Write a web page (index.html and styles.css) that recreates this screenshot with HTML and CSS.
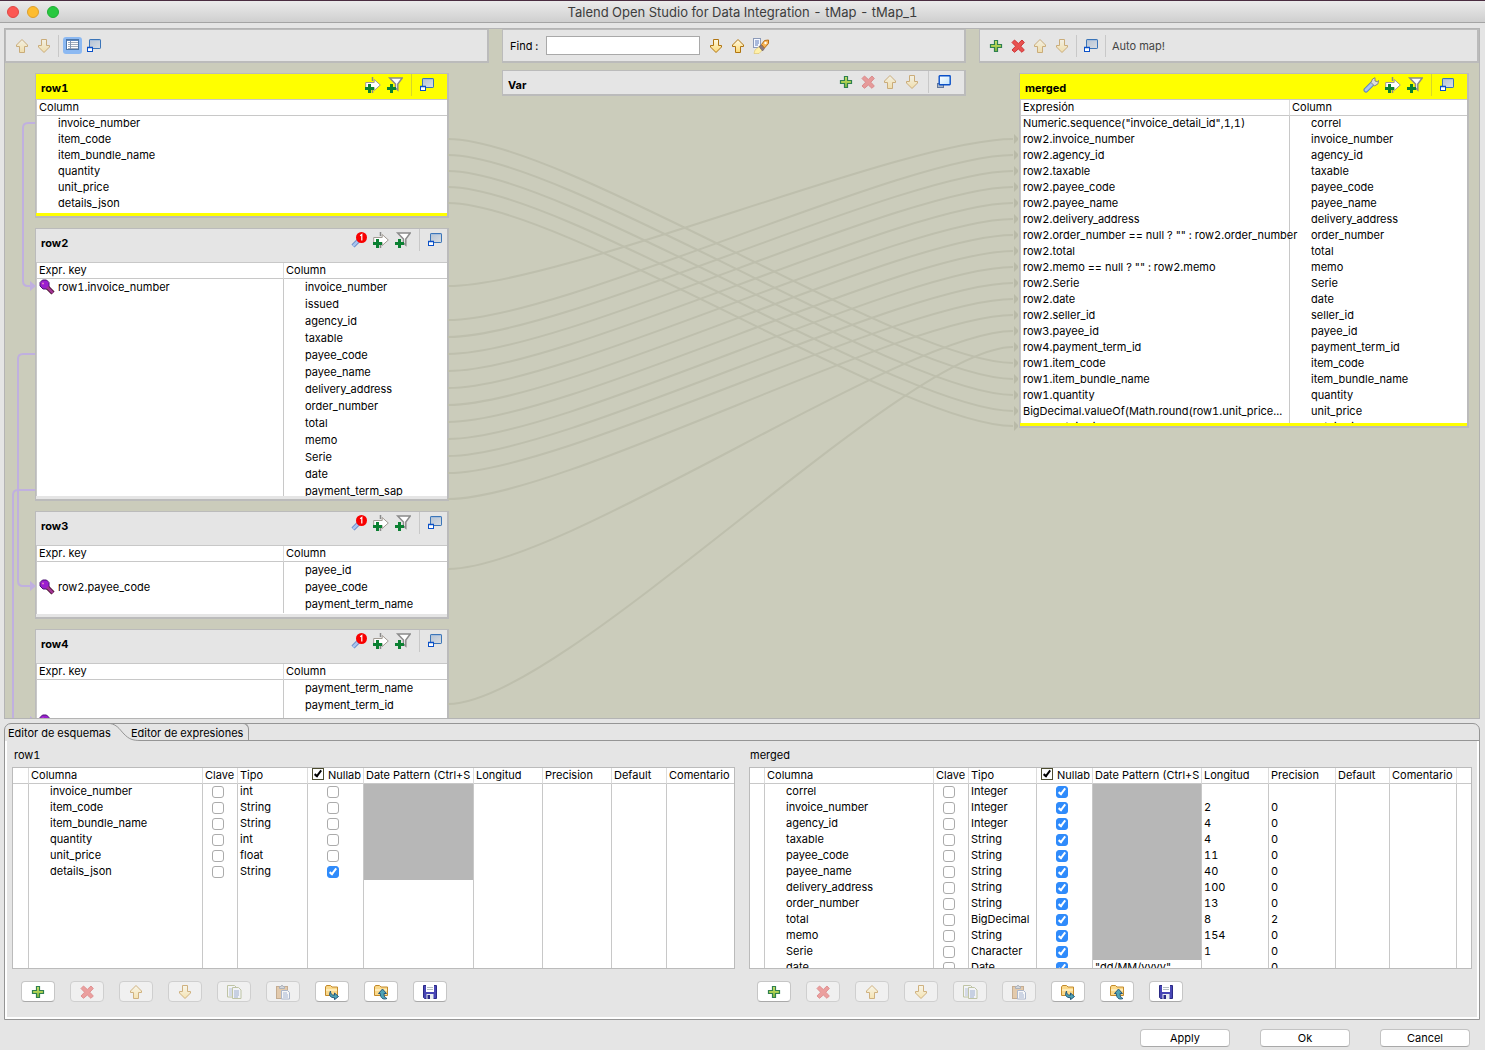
FILE: index.html
```html
<!DOCTYPE html>
<html lang="es">
<head>
<meta charset="utf-8">
<title>Talend Open Studio for Data Integration - tMap - tMap_1</title>
<link rel="stylesheet" href="styles.css">
</head>
<body>
<svg class="sprite" aria-hidden="true">
  <defs>
    <linearGradient id="g-gold" x1="0" y1="0" x2="0" y2="1"><stop offset="0" stop-color="#fffbe6"/><stop offset="1" stop-color="#fbd873"/></linearGradient>
    <linearGradient id="g-green" x1="0" y1="0" x2="0" y2="1"><stop offset="0" stop-color="#d9ea6a"/><stop offset="1" stop-color="#7fb53a"/></linearGradient>
    <linearGradient id="g-win" x1="0" y1="0" x2="1" y2="1"><stop offset="0" stop-color="#b4c2d4"/><stop offset="1" stop-color="#d8dde2"/></linearGradient>
    <linearGradient id="g-sky" x1="0" y1="0" x2="1" y2="1"><stop offset="0" stop-color="#ffffff"/><stop offset="1" stop-color="#bfe3fb"/></linearGradient>
  </defs>
  <symbol id="i-up" viewBox="0 0 16 16"><path d="M8 1.500 13.500 7v1.500h-3v6h-5v-6h-3V7z" fill="url(#g-gold)" stroke="#b07410"/></symbol>
  <symbol id="i-down" viewBox="0 0 16 16"><path d="M8 14.500 13.500 9V7.500h-3v-6h-5v6h-3V9z" fill="url(#g-gold)" stroke="#b07410"/></symbol>
  <symbol id="i-plus" viewBox="0 0 16 16"><path d="M6.500 2.500h3v4h4v3h-4v4h-3v-4h-4v-3h4z" fill="url(#g-green)" stroke="#2f8050" stroke-width="1.200"/></symbol>
  <symbol id="i-cross" viewBox="0 0 16 16"><path d="M2 4.500 4.500 2l3.800 3.500L12 2l2.300 2.500L10.800 8.200 14.300 12 12 14.300 8.300 11 4.500 14.300 2 12l3.600-3.800z" fill="#e8514f" stroke="#cf3436"/></symbol>
  <symbol id="i-min" viewBox="0 0 16 16"><rect x="3.500" y="1.500" width="11" height="9" rx=".6" fill="url(#g-win)" stroke="#3a74b8"/><path d="M4 2.500h10" stroke="#a5bddb"/><rect x="1.500" y="9.500" width="5" height="4" fill="#fff" stroke="#0a50c8"/><path d="M1 9.500h6" stroke="#0a50c8" stroke-width="1.500"/></symbol>
  <symbol id="i-restore" viewBox="0 0 16 16"><rect x="1.500" y="9.500" width="6" height="4" fill="#aab4c4" stroke="#60779c"/><rect x="3.200" y="1.700" width="11" height="9" rx=".6" fill="url(#g-sky)" stroke="#0a50c8" stroke-width="1.400"/></symbol>
  <symbol id="i-list" viewBox="0 0 16 16"><rect x="1.500" y="2.500" width="12" height="10" fill="#fff" stroke="#4f77a8"/><path d="M2 3.500h11" stroke="#5d86bd"/><path d="M3 5.500h10M3 7.500h10M3 9.500h10M3 11.500h10" stroke="#a3adbb"/><path d="M5.500 4v8" stroke="#8396b3"/></symbol>
  <symbol id="i-addarrow" viewBox="0 0 16 16"><path d="M7.500 0v4M7.500 12v4" stroke="#8a8a8a" stroke-width="1.500"/><path d="M.700 5.500h8.500V2.500L15.300 8l-6.100 5.500v-3H.700z" fill="#fff" stroke="#a19a93"/><path d="M4.500 7v9M0 11.500h9" stroke="#0b8032" stroke-width="3"/></symbol>
  <symbol id="i-filter" viewBox="0 0 16 16"><path d="M2.700 1h12.600L10.800 7v6L8.500 11V7z" fill="#fff" stroke="#8b8b8b" stroke-width="1.500"/><path d="M4.500 7v9M0 11.500h9" stroke="#0b8032" stroke-width="3"/></symbol>
  <symbol id="i-wrench" viewBox="0 0 16 16"><path d="M9.500 6.500 3 13" stroke="#5e83c4" stroke-width="5" stroke-linecap="round"/><path d="M9 7 3 13" stroke="#a9c4ee" stroke-width="3" stroke-linecap="round"/><path d="M8 5.500 9.500 2 12 .700V4l2.500.600L15.500 3.500l-.5 3.300-3.500 2.200z" fill="#ddd" stroke="#858585"/></symbol>
  <symbol id="i-join" viewBox="0 0 16 16"><path d="M8.500 7.500 2 14" stroke="#5e83c4" stroke-width="4.200"/><path d="M8 8l-6 6" stroke="#a9c4ee" stroke-width="2.500"/><circle cx="10.500" cy="5.500" r="5.500" fill="#f80000"/><path d="M9.200 3.700 10.800 2.500v6" fill="none" stroke="#fff" stroke-width="1.200"/></symbol>
  <symbol id="i-hilite" viewBox="0 0 18 18"><rect x="1.500" y="1.500" width="7" height="9" fill="#f5f8ff" stroke="#8c9ab8"/><path d="M3 4h4M3 6h4M3 8h3" stroke="#5d7bb8"/><path d="M3 13 8 9l3 3.500-4 4H2z" fill="#fff0a8" stroke="#d8b850" stroke-width=".5"/><path d="M7 9.500 9.500 8l3 3.500-2 2.500z" fill="#8d7b82" stroke="#65585e" stroke-width=".6"/><path d="M9.500 7.500 12.500 3.500 16.500 3v3.500L12.500 11z" fill="#f7b456" stroke="#b86e19"/><circle cx="13.500" cy="6" r="1.200" fill="#fff"/></symbol>
  <symbol id="i-key" viewBox="0 0 16 16"><path d="m8.500 8.500 5.500 5.500" stroke="#4a1430" stroke-width="4.500"/><path d="M3.500 1h4L10 3.500V8L8 10H4L1 7V3.500z" fill="#9b1fd0" stroke="#4a1470"/><path d="m8 8 5.800 5.800" stroke="#a33496" stroke-width="2.600"/><path d="M3 4.500h2M4 3.500v2" stroke="#dd7fc0"/></symbol>
  <symbol id="i-copy" viewBox="0 0 16 16"><path d="M1.500 1.500h7l1.500 1.500v10H1.500z" fill="#f7f9ff" stroke="#8f9a5c"/><path d="M3 5h3M3 7h3M3 9h3M3 11h3" stroke="#7c92bf"/><path d="M6.500 3.500h6l2.500 2.500v8.500H6.500z" fill="#f4f7ff" stroke="#8f9a5c"/><path d="M8 7h5M8 9h5M8 11h5M8 13h4" stroke="#4d6cad"/></symbol>
  <symbol id="i-paste" viewBox="0 0 16 16"><rect x="1.500" y="2.500" width="11" height="12" fill="#d8a56a" stroke="#9a6a35"/><path d="M4.500 4.500v-2h1.500l1-1.500 1 1.500h1.500v2z" fill="#b8c0cc" stroke="#69758a"/><path d="M6.500 6.500h6l2 2v6.500h-8z" fill="#fff" stroke="#6b80aa"/><path d="M8 9h4M8 11h5M8 13h5" stroke="#5a78b4"/></symbol>
  <symbol id="i-import" viewBox="0 0 16 16"><path d="M1.500 11.500V3l1-1.500h4L8 3h5.500v8.500z" fill="#fbd98a" stroke="#c28a2c"/><path d="M2 6h11" stroke="#fff1c4" stroke-width="1.500"/><path d="M6.500 7c0 3 1 4.200 4 4.200V9l4 3.500-4 3.200v-2c-4.500 0-6-2.500-4-6.700z" fill="#4ea3b5" stroke="#24587c"/></symbol>
  <symbol id="i-export" viewBox="0 0 16 16"><path d="M1.500 11.500V3l1-1.500h4L8 3h6.500v8.500z" fill="#fbd98a" stroke="#c28a2c"/><path d="M2 6h12" stroke="#fff1c4" stroke-width="1.500"/><path d="M5.500 9.500 9.500 5l4 4.500H11c0 3 1 4.500 3 5-4 1.500-6.700-.5-6.700-5z" fill="#4ea3b5" stroke="#24587c"/></symbol>
  <symbol id="i-save" viewBox="0 0 16 16"><path d="M1.500 1.500h13v13h-12l-1-1z" fill="#4745b5" stroke="#2b2a86"/><rect x="4" y="1" width="8" height="7" fill="#fff"/><path d="M5 3.500h6M5 5.500h6" stroke="#b3bdc2"/><rect x="4.500" y="10" width="7" height="5" fill="#e9edf0"/><rect x="5.500" y="11" width="2.500" height="4" fill="#2b2a86"/></symbol>
</svg>

<header class="titlebar">
  <div class="lights">
    <button class="light light-close" aria-label="Cerrar"></button>
    <button class="light light-min" aria-label="Minimizar"></button>
    <button class="light light-zoom" aria-label="Ampliar"></button>
  </div>
  <h1 class="window-title">Talend Open Studio for Data Integration - tMap - tMap_1</h1>
</header>

<main class="workspace">
  <section class="zone">
    <div class="toolbar toolbar-inputs">
      <button class="icon-btn" disabled aria-label="Subir"><svg><use href="#i-up"/></svg></button>
      <button class="icon-btn" disabled aria-label="Bajar"><svg><use href="#i-down"/></svg></button>
      <span class="sep"></span>
      <button class="icon-btn icon-btn-on" aria-label="Vista de tabla"><svg><use href="#i-list"/></svg></button>
      <button class="icon-btn" aria-label="Minimizar tablas"><svg><use href="#i-min"/></svg></button>
    </div>

    <article class="card card-active card-left">
      <header class="card-head">
        <h2>row1</h2>
        <button class="icon-btn" aria-label="Añadir salida"><svg><use href="#i-addarrow"/></svg></button>
        <button class="icon-btn" aria-label="Añadir filtro"><svg><use href="#i-filter"/></svg></button>
        <span class="sep"></span>
        <button class="icon-btn" aria-label="Minimizar"><svg><use href="#i-min"/></svg></button>
      </header>
      <div class="card-body card-body-row1">
        <table class="map-table">
          <thead><tr><th>Column</th></tr></thead>
          <tbody>
            <tr><td class="indent">invoice_number</td></tr>
            <tr><td class="indent">item_code</td></tr>
            <tr><td class="indent">item_bundle_name</td></tr>
            <tr><td class="indent">quantity</td></tr>
            <tr><td class="indent">unit_price</td></tr>
            <tr><td class="indent">details_json</td></tr>
          </tbody>
        </table>
      </div>
    </article>

    <article class="card card-lookup card-left">
      <header class="card-head">
        <h2>row2</h2>
        <button class="icon-btn" aria-label="Ajustes de unión (1)"><svg><use href="#i-join"/></svg></button>
        <button class="icon-btn" aria-label="Añadir salida"><svg><use href="#i-addarrow"/></svg></button>
        <button class="icon-btn" aria-label="Añadir filtro"><svg><use href="#i-filter"/></svg></button>
        <span class="sep"></span>
        <button class="icon-btn" aria-label="Minimizar"><svg><use href="#i-min"/></svg></button>
      </header>
      <div class="card-body card-body-row2">
        <table class="map-table map-lookup">
          <colgroup><col class="col-key"><col></colgroup>
          <thead><tr><th>Expr. key</th><th>Column</th></tr></thead>
          <tbody>
            <tr><td><span class="key"><svg><use href="#i-key"/></svg>row1.invoice_number</span></td><td class="indent">invoice_number</td></tr>
            <tr><td></td><td class="indent">issued</td></tr>
            <tr><td></td><td class="indent">agency_id</td></tr>
            <tr><td></td><td class="indent">taxable</td></tr>
            <tr><td></td><td class="indent">payee_code</td></tr>
            <tr><td></td><td class="indent">payee_name</td></tr>
            <tr><td></td><td class="indent">delivery_address</td></tr>
            <tr><td></td><td class="indent">order_number</td></tr>
            <tr><td></td><td class="indent">total</td></tr>
            <tr><td></td><td class="indent">memo</td></tr>
            <tr><td></td><td class="indent">Serie</td></tr>
            <tr><td></td><td class="indent">date</td></tr>
            <tr><td></td><td class="indent">payment_term_sap</td></tr>
          </tbody>
        </table>
      </div>
    </article>

    <article class="card card-lookup card-left">
      <header class="card-head">
        <h2>row3</h2>
        <button class="icon-btn" aria-label="Ajustes de unión (1)"><svg><use href="#i-join"/></svg></button>
        <button class="icon-btn" aria-label="Añadir salida"><svg><use href="#i-addarrow"/></svg></button>
        <button class="icon-btn" aria-label="Añadir filtro"><svg><use href="#i-filter"/></svg></button>
        <span class="sep"></span>
        <button class="icon-btn" aria-label="Minimizar"><svg><use href="#i-min"/></svg></button>
      </header>
      <div class="card-body card-body-row3">
        <table class="map-table map-lookup">
          <colgroup><col class="col-key"><col></colgroup>
          <thead><tr><th>Expr. key</th><th>Column</th></tr></thead>
          <tbody>
            <tr><td></td><td class="indent">payee_id</td></tr>
            <tr><td><span class="key"><svg><use href="#i-key"/></svg>row2.payee_code</span></td><td class="indent">payee_code</td></tr>
            <tr><td></td><td class="indent">payment_term_name</td></tr>
          </tbody>
        </table>
      </div>
    </article>

    <article class="card card-lookup card-left">
      <header class="card-head">
        <h2>row4</h2>
        <button class="icon-btn" aria-label="Ajustes de unión (1)"><svg><use href="#i-join"/></svg></button>
        <button class="icon-btn" aria-label="Añadir salida"><svg><use href="#i-addarrow"/></svg></button>
        <button class="icon-btn" aria-label="Añadir filtro"><svg><use href="#i-filter"/></svg></button>
        <span class="sep"></span>
        <button class="icon-btn" aria-label="Minimizar"><svg><use href="#i-min"/></svg></button>
      </header>
      <div class="card-body card-body-row3">
        <table class="map-table map-lookup">
          <colgroup><col class="col-key"><col></colgroup>
          <thead><tr><th>Expr. key</th><th>Column</th></tr></thead>
          <tbody>
            <tr><td></td><td class="indent">payment_term_name</td></tr>
            <tr><td></td><td class="indent">payment_term_id</td></tr>
            <tr><td><span class="key"><svg><use href="#i-key"/></svg></span></td><td></td></tr>
          </tbody>
        </table>
      </div>
    </article>
  </section>

  <section class="zone">
    <div class="toolbar toolbar-find">
      <label for="find">Find :</label>
      <input class="find-input" id="find" type="text">
      <button class="icon-btn" aria-label="Buscar siguiente"><svg><use href="#i-down"/></svg></button>
      <button class="icon-btn" aria-label="Buscar anterior"><svg><use href="#i-up"/></svg></button>
      <button class="icon-btn icon-btn-wide" aria-label="Resaltar todo"><svg><use href="#i-hilite"/></svg></button>
    </div>
    <article class="card card-var">
      <header class="card-head">
        <h2>Var</h2>
        <button class="icon-btn" aria-label="Añadir variable"><svg><use href="#i-plus"/></svg></button>
        <button class="icon-btn" disabled aria-label="Eliminar variable"><svg><use href="#i-cross"/></svg></button>
        <button class="icon-btn" disabled aria-label="Subir"><svg><use href="#i-up"/></svg></button>
        <button class="icon-btn" disabled aria-label="Bajar"><svg><use href="#i-down"/></svg></button>
        <span class="sep"></span>
        <button class="icon-btn" aria-label="Restaurar"><svg><use href="#i-restore"/></svg></button>
      </header>
    </article>
  </section>

  <section class="zone">
    <div class="toolbar toolbar-outputs">
      <button class="icon-btn" aria-label="Añadir tabla"><svg><use href="#i-plus"/></svg></button>
      <button class="icon-btn" aria-label="Eliminar tabla"><svg><use href="#i-cross"/></svg></button>
      <button class="icon-btn" disabled aria-label="Subir"><svg><use href="#i-up"/></svg></button>
      <button class="icon-btn" disabled aria-label="Bajar"><svg><use href="#i-down"/></svg></button>
      <span class="sep"></span>
      <button class="icon-btn" aria-label="Minimizar tablas"><svg><use href="#i-min"/></svg></button>
      <span class="sep"></span>
      <button class="text-btn">Auto map!</button>
    </div>
    <article class="card card-active card-right">
      <header class="card-head">
        <h2>merged</h2>
        <button class="icon-btn" aria-label="Ajustes"><svg><use href="#i-wrench"/></svg></button>
        <button class="icon-btn" aria-label="Añadir salida"><svg><use href="#i-addarrow"/></svg></button>
        <button class="icon-btn" aria-label="Añadir filtro"><svg><use href="#i-filter"/></svg></button>
        <span class="sep"></span>
        <button class="icon-btn" aria-label="Minimizar"><svg><use href="#i-min"/></svg></button>
      </header>
      <div class="card-body card-body-merged">
        <table class="map-table">
          <colgroup><col class="col-expr"><col></colgroup>
          <thead><tr><th>Expresión</th><th>Column</th></tr></thead>
          <tbody>
            <tr><td>Numeric.sequence("invoice_detail_id",1,1)</td><td class="indent">correl</td></tr>
            <tr><td>row2.invoice_number</td><td class="indent">invoice_number</td></tr>
            <tr><td>row2.agency_id</td><td class="indent">agency_id</td></tr>
            <tr><td>row2.taxable</td><td class="indent">taxable</td></tr>
            <tr><td>row2.payee_code</td><td class="indent">payee_code</td></tr>
            <tr><td>row2.payee_name</td><td class="indent">payee_name</td></tr>
            <tr><td>row2.delivery_address</td><td class="indent">delivery_address</td></tr>
            <tr><td>row2.order_number == null ? "" : row2.order_number</td><td class="indent">order_number</td></tr>
            <tr><td>row2.total</td><td class="indent">total</td></tr>
            <tr><td>row2.memo == null ? "" : row2.memo</td><td class="indent">memo</td></tr>
            <tr><td>row2.Serie</td><td class="indent">Serie</td></tr>
            <tr><td>row2.date</td><td class="indent">date</td></tr>
            <tr><td>row2.seller_id</td><td class="indent">seller_id</td></tr>
            <tr><td>row3.payee_id</td><td class="indent">payee_id</td></tr>
            <tr><td>row4.payment_term_id</td><td class="indent">payment_term_id</td></tr>
            <tr><td>row1.item_code</td><td class="indent">item_code</td></tr>
            <tr><td>row1.item_bundle_name</td><td class="indent">item_bundle_name</td></tr>
            <tr><td>row1.quantity</td><td class="indent">quantity</td></tr>
            <tr><td>BigDecimal.valueOf(Math.round(row1.unit_price...</td><td class="indent">unit_price</td></tr>
            <tr><td>row1.details_json</td><td class="indent">details_json</td></tr>
          </tbody>
        </table>
      </div>
    </article>
  </section>

  <!-- Join links between the input tables -->
  <svg class="links links-join" viewBox="0 0 31 690" aria-hidden="true">
    <path d="M30 94H23q-5 0-5 5v153q0 5 5 5h3"/>
    <path d="M30 325H18q-5 0-5 5v222q0 5 5 5h8"/>
    <path d="M30 461H13q-5 0-5 5v222q0 5 5 5h13"/>
    <path class="head" d="M25 252l6 5-6 5zM25 552l6 5-6 5zM25 687l6 5-6 5z"/>
  </svg>
  <!-- Mapping links from the inputs to the output table -->
  <svg class="links links-map" viewBox="0 0 570 690" preserveAspectRatio="none" aria-hidden="true">
    <path d="M0 110C114 110 456 334 565 334"/>
    <path d="M0 126C114 126 456 350 565 350"/>
    <path d="M0 142C114 142 456 366 565 366"/>
    <path d="M0 158C114 158 456 382 565 382"/>
    <path d="M0 174C114 174 456 397 565 397"/>
    <path d="M0 257C114 257 456 110 565 110"/>
    <path d="M0 291C114 291 456 126 565 126"/>
    <path d="M0 308C114 308 456 142 565 142"/>
    <path d="M0 325C114 325 456 158 565 158"/>
    <path d="M0 342C114 342 456 174 565 174"/>
    <path d="M0 359C114 359 456 190 565 190"/>
    <path d="M0 376C114 376 456 206 565 206"/>
    <path d="M0 393C114 393 456 222 565 222"/>
    <path d="M0 410C114 410 456 238 565 238"/>
    <path d="M0 427C114 427 456 254 565 254"/>
    <path d="M0 444C114 444 456 270 565 270"/>
    <path d="M0 470C114 470 456 286 565 286"/>
    <path d="M0 540C114 540 456 302 565 302"/>
    <path d="M0 675C114 675 456 318 565 318"/>
    <path class="head" d="M566 105l5 5-5 5zM566 121l5 5-5 5zM566 137l5 5-5 5zM566 153l5 5-5 5zM566 169l5 5-5 5zM566 185l5 5-5 5zM566 201l5 5-5 5zM566 217l5 5-5 5zM566 233l5 5-5 5zM566 249l5 5-5 5zM566 265l5 5-5 5zM566 281l5 5-5 5zM566 297l5 5-5 5zM566 313l5 5-5 5zM566 329l5 5-5 5zM566 345l5 5-5 5zM566 361l5 5-5 5zM566 377l5 5-5 5zM566 392l5 5-5 5z"/>
  </svg>
</main>

<section class="folder">
  <div class="tabs" role="tablist">
    <button class="tab tab-on" role="tab" aria-selected="true">Editor de esquemas<svg class="tab-curve" viewBox="0 0 36 18" aria-hidden="true"><path d="M0 0C12 0 14 6 19 11 24 16 27 17.500 36 17.500"/></svg></button>
    <button class="tab tab-off" role="tab" aria-selected="false">Editor de expresiones</button>
    <span class="tab-rest"></span>
  </div>
  <div class="folder-body">
    <section class="schema">
      <h2 class="schema-name">row1</h2>
      <div class="schema-box">
        <table class="schema-table">
          <colgroup><col class="w16"><col class="w174"><col class="w35"><col class="w70"><col class="w56"><col class="w110"><col class="w69"><col class="w69"><col class="w55"><col></colgroup>
          <thead><tr><th></th><th>Columna</th><th>Clave</th><th>Tipo</th><th class="th-null"><label><input class="head-check" type="checkbox" checked>Nullab</label></th><th>Date Pattern (Ctrl+S</th><th>Longitud</th><th>Precision</th><th>Default</th><th>Comentario</th></tr></thead>
          <tbody>
            <tr><td></td><td class="name">invoice_number</td><td class="chk"><input type="checkbox" aria-label="Clave invoice_number"></td><td>int</td><td class="chk"><input type="checkbox" aria-label="Nullable invoice_number"></td><td class="off"></td><td></td><td></td><td></td><td></td></tr>
            <tr><td></td><td class="name">item_code</td><td class="chk"><input type="checkbox" aria-label="Clave item_code"></td><td>String</td><td class="chk"><input type="checkbox" aria-label="Nullable item_code"></td><td class="off"></td><td></td><td></td><td></td><td></td></tr>
            <tr><td></td><td class="name">item_bundle_name</td><td class="chk"><input type="checkbox" aria-label="Clave item_bundle_name"></td><td>String</td><td class="chk"><input type="checkbox" aria-label="Nullable item_bundle_name"></td><td class="off"></td><td></td><td></td><td></td><td></td></tr>
            <tr><td></td><td class="name">quantity</td><td class="chk"><input type="checkbox" aria-label="Clave quantity"></td><td>int</td><td class="chk"><input type="checkbox" aria-label="Nullable quantity"></td><td class="off"></td><td></td><td></td><td></td><td></td></tr>
            <tr><td></td><td class="name">unit_price</td><td class="chk"><input type="checkbox" aria-label="Clave unit_price"></td><td>float</td><td class="chk"><input type="checkbox" aria-label="Nullable unit_price"></td><td class="off"></td><td></td><td></td><td></td><td></td></tr>
            <tr><td></td><td class="name">details_json</td><td class="chk"><input type="checkbox" aria-label="Clave details_json"></td><td>String</td><td class="chk"><input type="checkbox" checked aria-label="Nullable details_json"></td><td class="off"></td><td></td><td></td><td></td><td></td></tr>
            <tr class="rest"><td></td><td></td><td></td><td></td><td></td><td></td><td></td><td></td><td></td><td></td></tr>
          </tbody>
        </table>
      </div>
      <div class="schema-actions">
        <button class="push" aria-label="Añadir"><svg><use href="#i-plus"/></svg></button>
        <button class="push" disabled aria-label="Eliminar"><svg><use href="#i-cross"/></svg></button>
        <button class="push" disabled aria-label="Subir"><svg><use href="#i-up"/></svg></button>
        <button class="push" disabled aria-label="Bajar"><svg><use href="#i-down"/></svg></button>
        <button class="push" disabled aria-label="Copiar"><svg><use href="#i-copy"/></svg></button>
        <button class="push" disabled aria-label="Pegar"><svg><use href="#i-paste"/></svg></button>
        <button class="push" aria-label="Importar"><svg><use href="#i-import"/></svg></button>
        <button class="push" aria-label="Exportar"><svg><use href="#i-export"/></svg></button>
        <button class="push" aria-label="Guardar"><svg><use href="#i-save"/></svg></button>
      </div>
    </section>

    <section class="schema">
      <h2 class="schema-name">merged</h2>
      <div class="schema-box">
        <table class="schema-table">
          <colgroup><col class="w15"><col class="w169"><col class="w35"><col class="w68"><col class="w56"><col class="w109"><col class="w67"><col class="w67"><col class="w54"><col class="w67"><col></colgroup>
          <thead><tr><th></th><th>Columna</th><th>Clave</th><th>Tipo</th><th class="th-null"><label><input class="head-check" type="checkbox" checked>Nullab</label></th><th>Date Pattern (Ctrl+S</th><th>Longitud</th><th>Precision</th><th>Default</th><th>Comentario</th><th></th></tr></thead>
          <tbody>
            <tr><td></td><td class="name">correl</td><td class="chk"><input type="checkbox" aria-label="Clave correl"></td><td>Integer</td><td class="chk"><input type="checkbox" checked aria-label="Nullable correl"></td><td class="off"></td><td></td><td></td><td></td><td></td><td></td></tr>
            <tr><td></td><td class="name">invoice_number</td><td class="chk"><input type="checkbox" aria-label="Clave invoice_number"></td><td>Integer</td><td class="chk"><input type="checkbox" checked aria-label="Nullable invoice_number"></td><td class="off"></td><td>2</td><td>0</td><td></td><td></td><td></td></tr>
            <tr><td></td><td class="name">agency_id</td><td class="chk"><input type="checkbox" aria-label="Clave agency_id"></td><td>Integer</td><td class="chk"><input type="checkbox" checked aria-label="Nullable agency_id"></td><td class="off"></td><td>4</td><td>0</td><td></td><td></td><td></td></tr>
            <tr><td></td><td class="name">taxable</td><td class="chk"><input type="checkbox" aria-label="Clave taxable"></td><td>String</td><td class="chk"><input type="checkbox" checked aria-label="Nullable taxable"></td><td class="off"></td><td>4</td><td>0</td><td></td><td></td><td></td></tr>
            <tr><td></td><td class="name">payee_code</td><td class="chk"><input type="checkbox" aria-label="Clave payee_code"></td><td>String</td><td class="chk"><input type="checkbox" checked aria-label="Nullable payee_code"></td><td class="off"></td><td>11</td><td>0</td><td></td><td></td><td></td></tr>
            <tr><td></td><td class="name">payee_name</td><td class="chk"><input type="checkbox" aria-label="Clave payee_name"></td><td>String</td><td class="chk"><input type="checkbox" checked aria-label="Nullable payee_name"></td><td class="off"></td><td>40</td><td>0</td><td></td><td></td><td></td></tr>
            <tr><td></td><td class="name">delivery_address</td><td class="chk"><input type="checkbox" aria-label="Clave delivery_address"></td><td>String</td><td class="chk"><input type="checkbox" checked aria-label="Nullable delivery_address"></td><td class="off"></td><td>100</td><td>0</td><td></td><td></td><td></td></tr>
            <tr><td></td><td class="name">order_number</td><td class="chk"><input type="checkbox" aria-label="Clave order_number"></td><td>String</td><td class="chk"><input type="checkbox" checked aria-label="Nullable order_number"></td><td class="off"></td><td>13</td><td>0</td><td></td><td></td><td></td></tr>
            <tr><td></td><td class="name">total</td><td class="chk"><input type="checkbox" aria-label="Clave total"></td><td>BigDecimal</td><td class="chk"><input type="checkbox" checked aria-label="Nullable total"></td><td class="off"></td><td>8</td><td>2</td><td></td><td></td><td></td></tr>
            <tr><td></td><td class="name">memo</td><td class="chk"><input type="checkbox" aria-label="Clave memo"></td><td>String</td><td class="chk"><input type="checkbox" checked aria-label="Nullable memo"></td><td class="off"></td><td>154</td><td>0</td><td></td><td></td><td></td></tr>
            <tr><td></td><td class="name">Serie</td><td class="chk"><input type="checkbox" aria-label="Clave Serie"></td><td>Character</td><td class="chk"><input type="checkbox" checked aria-label="Nullable Serie"></td><td class="off"></td><td>1</td><td>0</td><td></td><td></td><td></td></tr>
            <tr><td></td><td class="name">date</td><td class="chk"><input type="checkbox" aria-label="Clave date"></td><td>Date</td><td class="chk"><input type="checkbox" checked aria-label="Nullable date"></td><td>"dd/MM/yyyy"</td><td></td><td>0</td><td></td><td></td><td></td></tr>
          </tbody>
        </table>
      </div>
      <div class="schema-actions">
        <button class="push" aria-label="Añadir"><svg><use href="#i-plus"/></svg></button>
        <button class="push" disabled aria-label="Eliminar"><svg><use href="#i-cross"/></svg></button>
        <button class="push" disabled aria-label="Subir"><svg><use href="#i-up"/></svg></button>
        <button class="push" disabled aria-label="Bajar"><svg><use href="#i-down"/></svg></button>
        <button class="push" disabled aria-label="Copiar"><svg><use href="#i-copy"/></svg></button>
        <button class="push" disabled aria-label="Pegar"><svg><use href="#i-paste"/></svg></button>
        <button class="push" aria-label="Importar"><svg><use href="#i-import"/></svg></button>
        <button class="push" aria-label="Exportar"><svg><use href="#i-export"/></svg></button>
        <button class="push" aria-label="Guardar"><svg><use href="#i-save"/></svg></button>
      </div>
    </section>
  </div>
</section>

<footer class="dialog-actions">
  <button class="push-text">Apply</button>
  <button class="push-text">Ok</button>
  <button class="push-text">Cancel</button>
</footer>
</body>
</html>
```
FILE: styles.css
```css
:root {
  --panel: #e5e5e5;
  --canvas: #cbccbb;
  --line: #bbbbbb;
  --line-soft: #c8c8c8;
  --active: #ffff00;
}

*, *::before, *::after { box-sizing: border-box; }

body {
  margin: 0;
  height: 100vh;
  display: flex;
  flex-direction: column;
  background: var(--panel);
  color: #000;
  font: 11px/16px Inter, "Liberation Sans", sans-serif;
  font-variant-numeric: tabular-nums;
  overflow: hidden;
}

button, input { font: inherit; color: inherit; margin: 0; }
h1, h2 { margin: 0; font-size: 11px; line-height: 16px; }
.sprite { position: absolute; width: 0; height: 0; }

/* Title bar */
.titlebar {
  flex: none;
  display: grid;
  grid-template-columns: 80px 1fr 80px;
  align-items: center;
  height: 23px;
  padding-top: 1px;
  border-top: 1px solid #4a2c40;
  border-bottom: 1px solid #a4a4a4;
  background: linear-gradient(#ebebeb, #cfcfcf);
}
.lights { display: flex; gap: 8px; padding-left: 7px; }
.light { width: 12px; height: 12px; padding: 0; border: 1px solid; border-radius: 50%; }
.light-close { background: #fc5753; border-color: #df4744; }
.light-min { background: #fdbc2f; border-color: #de9f2c; }
.light-zoom { background: #28c840; border-color: #1fae33; }
.window-title { font-size: 13px; font-weight: 400; color: #3c3c3c; text-align: center; }

/* Mapping canvas */
.workspace {
  flex: 1 1 0;
  min-height: 0;
  position: relative;
  display: grid;
  grid-template-columns: 484px minmax(0, 1fr) 500px;
  gap: 13px;
  margin: 5px 5px 4px 4px;
  border: 1px solid #b4b4b4;
  background: var(--canvas);
  overflow: hidden;
}
.zone { display: flex; flex-direction: column; gap: 10px; min-width: 0; min-height: 0; }
.zone > * { flex: none; }

.toolbar {
  display: flex;
  align-items: center;
  gap: 6px;
  height: 34px;
  padding-left: 8px;
  border: 1px solid var(--line);
  border-width: 1px 2px 2px 1px;
  background: var(--panel);
}
.sep { width: 1px; height: 22px; background: var(--line-soft); }
.toolbar-inputs .sep { margin-right: -2px; }
.toolbar-inputs .icon-btn-on { margin-right: -2px; }
.toolbar-find { padding-left: 7px; }
.toolbar-find label { width: 30px; white-space: nowrap; }
.find-input {
  width: 154px;
  height: 19px;
  margin-right: 2px;
  padding: 0 3px;
  border: 1px solid #a9a9a9;
  background: #fff;
}
.text-btn { padding: 0; border: 0; background: none; color: #444; }

.icon-btn { display: flex; width: 16px; height: 16px; padding: 0; border: 0; background: none; }
.icon-btn svg { width: 100%; height: 100%; }
.icon-btn:disabled { opacity: .5; }
.icon-btn-wide { width: 18px; height: 18px; }
.icon-btn-on { width: 19px; height: 17px; padding: 0 1px 1px 2px; border-radius: 3px; background: #8cb9f2; }

/* Table cards */
.card {
  padding-bottom: 3px;
  border: 1px solid var(--line);
  border-width: 1px 2px 2px 1px;
  background: var(--panel);
}
.card-left { margin: 0 40px 0 30px; }
.card-right { margin: 0 10px 0 40px; }
.card-var { margin-top: -3px; padding-bottom: 0; }
.card-active { background: var(--active); }

.card-head {
  display: flex;
  align-items: flex-start;
  gap: 6px;
  height: 26px;
  padding: 3px 12px 0 5px;
  border-bottom: 1px solid var(--line-soft);
}
.card-head h2 { flex: 1; padding-top: 3px; font-weight: 700; }
.card-head .sep { margin: -3px 1px 0 2px; }
.card-active .sep { background: #d6d62a; }
.card-lookup .card-head { height: 34px; padding-right: 4px; }
.card-var .card-head { height: 23px; border-bottom: 0; }

.card-body { background: #fff; border-left: 1px solid var(--line-soft); overflow: hidden; }
.card-body-row1 { height: 113px; }
.card-body-row2 { height: 233px; }
.card-body-row3 { height: 68px; }
.card-body-merged { height: 323px; }

.map-table, .schema-table { width: 100%; table-layout: fixed; border-collapse: separate; border-spacing: 0; }
th { text-align: left; font-weight: 400; }
th, td { padding: 0 2px; white-space: nowrap; overflow: hidden; }
td { line-height: 14px; vertical-align: top; }
.map-table th { height: 16px; line-height: 15px; border-bottom: 1px solid var(--line-soft); }
.map-table td { height: 16px; }
.map-table td:first-child { overflow: visible; }
.map-lookup td { height: 17px; line-height: 16px; }
.map-table th + th { border-left: 1px solid #dcdcdc; }
.map-table td + td { border-left: 1px solid var(--line-soft); }
.map-table .indent { padding-left: 21px; }
.col-key { width: 246px; }
.col-expr { width: 268px; }
.key { display: flex; align-items: flex-start; gap: 3px; height: 16px; }
.key svg { flex: none; width: 16px; height: 16px; }

/* Links drawn over the canvas */
.links { position: absolute; top: 0; height: 690px; fill: none; stroke-width: 2; pointer-events: none; }
.links .head { stroke: none; }
.links-join { left: 0; width: 31px; stroke: #c0b0df; }
.links-join .head { fill: #c0b0df; }
.links-map { left: 443px; width: calc(100% - 904px); stroke: #bebfad; }
.links-map .head { fill: #b9baa8; }

/* Editor folder */
.folder {
  flex: none;
  margin: 0 5px 0 4px;
  border: 1px solid #959595;
  border-radius: 7px 7px 0 0;
}
.tabs { display: flex; height: 17px; }
.tab { position: relative; padding: 0; border: 0; background: none; text-align: left; white-space: nowrap; line-height: 19px; }
.tab-on { width: 126px; padding-left: 3px; }
.tab-curve { position: absolute; left: 100px; top: -1px; width: 36px; height: 18px; fill: none; stroke: #959595; }
.tab-off {
  width: 118px;
  margin-top: -1px;
  height: 18px;
  border-right: 1px solid #959595;
  border-top: 1px solid #959595;
  border-top-right-radius: 6px;
}
.tab-off::after { content: ""; position: absolute; left: 8px; right: 0; bottom: 0; height: 1px; background: #959595; }
.tab-rest { flex: 1; border-bottom: 1px solid #959595; }
.folder-body {
  display: grid;
  grid-template-columns: minmax(0, 1fr) minmax(0, 1fr);
  gap: 14px;
  padding: 0 5px 15px;
  border: 2px solid #fff;
  border-top: 0;
}
.schema-name { padding: 6px 2px 4px; font-weight: 400; }
.schema:last-child .schema-name { padding-left: 1px; }
.schema-box { height: 202px; border: 1px solid var(--line); background: #fff; overflow: hidden; }
.schema-table { height: 200px; }
.schema-table th { height: 16px; line-height: 15px; border-right: 1px solid #dcdcdc; border-bottom: 1px solid var(--line-soft); }
.schema-table td { height: 16px; border-right: 1px solid var(--line-soft); }
.schema-table .rest td { height: auto; }
.schema-table .name { padding-left: 21px; }
.schema-table .chk { padding: 0 5px 0 0; line-height: 0; text-align: center; vertical-align: middle; }
.schema-table .off { background: #b7b7b7; }
.schema-table th:last-child, .schema-table td:last-child { border-right: 0; }
.th-null label { display: flex; align-items: flex-start; gap: 4px; height: 15px; padding-left: 2px; }
.w15 { width: 15px; } .w16 { width: 16px; } .w35 { width: 35px; } .w54 { width: 54px; }
.w55 { width: 55px; } .w56 { width: 56px; } .w67 { width: 67px; } .w68 { width: 68px; }
.w69 { width: 69px; } .w70 { width: 70px; } .w109 { width: 109px; } .w110 { width: 110px; }
.w169 { width: 169px; } .w174 { width: 174px; }

input[type="checkbox"] {
  appearance: none;
  flex: none;
  position: relative;
  width: 12px;
  height: 12px;
  border: 1px solid #ababab;
  border-radius: 3px;
  background: #fff;
  vertical-align: middle;
}
input[type="checkbox"]:checked { border-color: #2f8bfb; background: #2f8bfb; }
input[type="checkbox"]:checked::after {
  content: "";
  position: absolute;
  left: 3px;
  top: 0;
  width: 4px;
  height: 8px;
  border: solid #fff;
  border-width: 0 2px 2px 0;
  transform: rotate(38deg);
}
input.head-check:checked { border-color: #4c4c30; border-radius: 0; background: #fff; }
input.head-check:checked::after { border-color: #000; }

.schema-actions { display: flex; gap: 15px; padding: 12px 0 0 9px; }
.schema:last-child .schema-actions { padding-left: 8px; }
.push {
  display: flex;
  align-items: center;
  justify-content: center;
  width: 34px;
  height: 21px;
  padding: 0;
  border: 1px solid #c6c6c6;
  border-bottom-color: #a9a9a9;
  border-radius: 4px;
  background: #fff;
}
.push svg { width: 16px; height: 16px; }
.push:disabled { border-color: #cfcfcf; background: #f0f0f0; }
.push:disabled svg { opacity: .5; }

.dialog-actions { flex: none; display: flex; justify-content: flex-end; gap: 30px; padding: 9px 15px 3px; }
.push-text {
  width: 90px;
  height: 18px;
  padding: 0;
  border: 1px solid #c3c3c3;
  border-bottom-color: #a9a9a9;
  border-radius: 4px;
  background: #fff;
  line-height: 16px;
}
```
